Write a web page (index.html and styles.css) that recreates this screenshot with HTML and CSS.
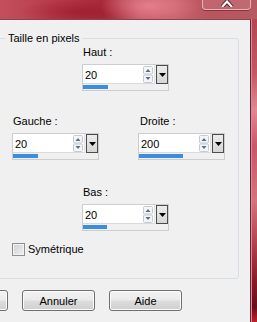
FILE: index.html
```html
<!DOCTYPE html>
<html lang="fr">
<head>
  <meta charset="UTF-8" />
  <title>Taille en pixels</title>
  <link rel="stylesheet" href="styles.css">
</head>
<body>
  <div class="window">
    <div class="titlebar">
      <div class="close-btn">
        <svg width="14" height="7" viewBox="0 0 14 7">
          <path d="M2 7L7 1.5L12 7" fill="none" stroke="#4a1d24" stroke-width="4"/>
          <path d="M2 7L7 1.5L12 7" fill="none" stroke="#ffffff" stroke-width="2.2"/>
        </svg>
      </div>
    </div>

    <div class="frame-row">
      <div class="client">
        <fieldset class="group">
          <legend>Taille en pixels</legend>

          <div class="field field-center">
            <label class="field-label">Haut :</label>
            <div class="numctl">
              <div class="numctl-main">
                <div class="numctl-edit">
                  <span class="numctl-value">20</span>
                  <svg class="spin" width="10" height="17" viewBox="0 0 10 17">
                    <rect x="0.5" y="0.5" width="9" height="7.5" rx="1" fill="#f3f5f8" stroke="#c3cad4"/>
                    <rect x="0.5" y="9" width="9" height="7.5" rx="1" fill="#f3f5f8" stroke="#c3cad4"/>
                    <path d="M2.5 6h5L5 3z" fill="#5b6c88"/>
                    <path d="M2.5 11h5L5 14z" fill="#5b6c88"/>
                  </svg>
                </div>
                <div class="numctl-drop">
                  <svg width="7" height="4" viewBox="0 0 7 4"><path d="M0 0h7L3.5 4z" fill="#000"/></svg>
                </div>
              </div>
              <div class="numctl-track"><div class="numctl-fill" style="width:25px"></div></div>
            </div>
          </div>

          <div class="pair">
            <div class="field">
              <label class="field-label">Gauche :</label>
              <div class="numctl">
                <div class="numctl-main">
                  <div class="numctl-edit">
                    <span class="numctl-value">20</span>
                    <svg class="spin" width="10" height="17" viewBox="0 0 10 17">
                      <rect x="0.5" y="0.5" width="9" height="7.5" rx="1" fill="#f3f5f8" stroke="#c3cad4"/>
                      <rect x="0.5" y="9" width="9" height="7.5" rx="1" fill="#f3f5f8" stroke="#c3cad4"/>
                      <path d="M2.5 6h5L5 3z" fill="#5b6c88"/>
                      <path d="M2.5 11h5L5 14z" fill="#5b6c88"/>
                    </svg>
                  </div>
                  <div class="numctl-drop">
                    <svg width="7" height="4" viewBox="0 0 7 4"><path d="M0 0h7L3.5 4z" fill="#000"/></svg>
                  </div>
                </div>
                <div class="numctl-track"><div class="numctl-fill" style="width:25px"></div></div>
              </div>
            </div>

            <div class="field field-right">
              <label class="field-label">Droite :</label>
              <div class="numctl">
                <div class="numctl-main">
                  <div class="numctl-edit">
                    <span class="numctl-value">200</span>
                    <svg class="spin" width="10" height="17" viewBox="0 0 10 17">
                      <rect x="0.5" y="0.5" width="9" height="7.5" rx="1" fill="#f3f5f8" stroke="#c3cad4"/>
                      <rect x="0.5" y="9" width="9" height="7.5" rx="1" fill="#f3f5f8" stroke="#c3cad4"/>
                      <path d="M2.5 6h5L5 3z" fill="#5b6c88"/>
                      <path d="M2.5 11h5L5 14z" fill="#5b6c88"/>
                    </svg>
                  </div>
                  <div class="numctl-drop">
                    <svg width="7" height="4" viewBox="0 0 7 4"><path d="M0 0h7L3.5 4z" fill="#000"/></svg>
                  </div>
                </div>
                <div class="numctl-track"><div class="numctl-fill" style="width:44px"></div></div>
              </div>
            </div>
          </div>

          <div class="field field-center field-bottom">
            <label class="field-label">Bas :</label>
            <div class="numctl">
              <div class="numctl-main">
                <div class="numctl-edit">
                  <span class="numctl-value">20</span>
                  <svg class="spin" width="10" height="17" viewBox="0 0 10 17">
                    <rect x="0.5" y="0.5" width="9" height="7.5" rx="1" fill="#f3f5f8" stroke="#c3cad4"/>
                    <rect x="0.5" y="9" width="9" height="7.5" rx="1" fill="#f3f5f8" stroke="#c3cad4"/>
                    <path d="M2.5 6h5L5 3z" fill="#5b6c88"/>
                    <path d="M2.5 11h5L5 14z" fill="#5b6c88"/>
                  </svg>
                </div>
                <div class="numctl-drop">
                  <svg width="7" height="4" viewBox="0 0 7 4"><path d="M0 0h7L3.5 4z" fill="#000"/></svg>
                </div>
              </div>
              <div class="numctl-track"><div class="numctl-fill" style="width:24px"></div></div>
            </div>
          </div>

          <label class="check"><span class="check-box"></span>Symétrique</label>
        </fieldset>

        <div class="buttons">
          <button class="btn" aria-label="OK"></button>
          <button class="btn">Annuler</button>
          <button class="btn">Aide</button>
        </div>
      </div>
      <div class="side"></div>
    </div>
  </div>
</body>
</html>
```

FILE: styles.css
```css
* {
  box-sizing: border-box;
}

html, body {
  margin: 0;
  padding: 0;
  width: 257px;
  height: 322px;
  overflow: hidden;
  font-family: 'Liberation Sans', Arial, sans-serif;
  font-size: 11px;
  line-height: 13px;
  color: #000;
}

.window {
  display: flex;
  flex-direction: column;
  height: 322px;
}

/* red aero frame */
.titlebar {
  height: 19px;
  display: flex;
  justify-content: flex-end;
  padding-right: 6px;
  background:
    radial-gradient(ellipse 50px 18px at 150px 6px, rgba(236, 140, 150, 0.75), transparent),
    radial-gradient(ellipse 60px 14px at 80px 12px, rgba(150, 20, 40, 0.6), transparent),
    linear-gradient(90deg, #c44f5c 0%, #b53848 25%, #aa2c3c 40%, #c95666 55%, #c8606b 68%, #b8555e 82%, #b65a62 100%);
}

.close-btn {
  width: 49px;
  height: 10px;
  border: 1px solid #e2b3b8;
  border-top: none;
  border-radius: 0 0 4px 4px;
  background: rgba(255, 220, 225, 0.12);
  box-shadow: 0 1px 0 rgba(90, 20, 30, 0.5);
  display: flex;
  justify-content: center;
  align-items: flex-start;
}

.frame-row {
  flex: 1;
  display: flex;
}

.side {
  flex: 1;
  border-left: 1px solid #d98a94;
  background: linear-gradient(180deg, #b34552 0%, #c55864 18%, #e08893 30%, #c9566a 42%, #d4737e 60%, #b4424f 74%, #8a1b2b 86%, #6a0d1a 95%, #c0202c 100%);
}

.client {
  width: 251px;
  background: #f0f0f0;
  border-top: 1px solid #8a4650;
  border-right: 1px solid #5e2a32;
  overflow: hidden;
}

/* group box */
.group {
  margin: 12px 0 0 -3px;
  width: 242px;
  padding: 0 0 22px 14px;
  border: 1px solid #d5dfe5;
  border-radius: 3px;
  min-inline-size: 0;
}

.group legend {
  margin-left: -6px;
  padding: 0 2px;
}

.field-label {
  display: block;
  padding-left: 1px;
  margin-bottom: 5px;
}

.field-center {
  margin-left: 70px;
  padding-top: 1px;
}

.field-bottom {
  margin-top: 25px;
}

.pair {
  display: flex;
  gap: 39px;
  margin-top: 24px;
}

.field-right .field-label {
  padding-left: 2px;
}

/* numeric edit with slider */
.numctl {
  width: 87px;
  border: 1px solid #cdcdcd;
  background: #f0f0f0;
}

.numctl-main {
  display: flex;
  gap: 1px;
  height: 19px;
}

.numctl-edit {
  flex: 1;
  display: flex;
  align-items: center;
  justify-content: space-between;
  background: #fff;
  border-right: 1px solid #e2e2e2;
  border-bottom: 1px solid #dadada;
  padding: 0 1px 0 2px;
}

.numctl-value {
  padding-top: 2px;
}

.numctl-drop {
  width: 12px;
  border: 1px solid #4c4c4c;
  background: linear-gradient(#ececec, #d6d6d6);
  display: flex;
  align-items: center;
  justify-content: center;
}

.numctl-track {
  height: 6px;
  padding-top: 1px;
}

.numctl-fill {
  height: 4px;
  background: #3c8de0;
}

/* checkbox */
.check {
  display: flex;
  align-items: center;
  gap: 3px;
  margin-top: 12px;
}

.check-box {
  width: 13px;
  height: 13px;
  border: 1px solid #8e8f8f;
  background: linear-gradient(135deg, #cdd1d7, #f0f1f3);
  box-shadow: inset 0 0 0 1px #f4f4f4;
}

/* buttons */
.buttons {
  display: flex;
  gap: 14px;
  margin: 11px 0 0 -65px;
}

.btn {
  width: 73px;
  height: 21px;
  padding: 0;
  font-family: 'Liberation Sans', Arial, sans-serif;
  font-size: 11px;
  color: #000;
  border: 1px solid #707070;
  border-radius: 3px;
  background: linear-gradient(#f2f2f2 0%, #ebebeb 48%, #dddddd 52%, #cfcfcf 100%);
  box-shadow: inset 0 0 0 1px #fbfbfb;
}
```
